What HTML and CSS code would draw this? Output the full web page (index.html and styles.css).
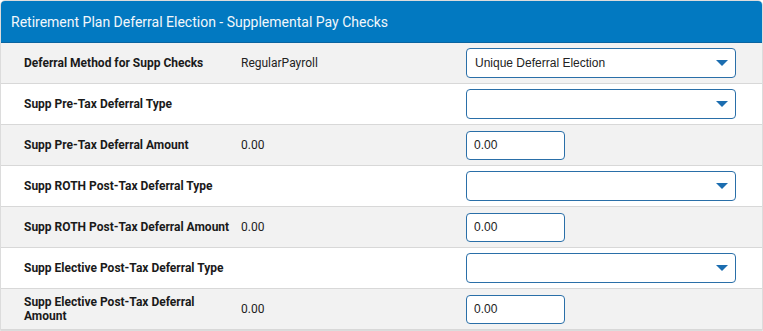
FILE: index.html
```html
<!DOCTYPE html>
<html lang="en">
<head>
    <meta charset="UTF-8">
    <meta name="viewport" content="width=device-width, initial-scale=1.0">
    <title>Supplemental Pay Checks</title>
    <link rel="stylesheet" href="styles.css">
</head>
<body>
    <div class="panel">
        <div class="panel-header">Retirement Plan Deferral Election - Supplemental Pay Checks</div>
        <div class="rows">
            <div class="row">
                <div class="label">Deferral Method for Supp Checks</div>
                <div class="value">RegularPayroll</div>
                <div class="control">
                    <div class="select">
                        <span>Unique Deferral Election</span>
                        <svg class="caret" width="12" height="6" viewBox="0 0 12 6"><path d="M0 0H12L6 6Z"/></svg>
                    </div>
                </div>
            </div>
            <div class="row">
                <div class="label">Supp Pre-Tax Deferral Type</div>
                <div class="value"></div>
                <div class="control">
                    <div class="select">
                        <span></span>
                        <svg class="caret" width="12" height="6" viewBox="0 0 12 6"><path d="M0 0H12L6 6Z"/></svg>
                    </div>
                </div>
            </div>
            <div class="row">
                <div class="label">Supp Pre-Tax Deferral Amount</div>
                <div class="value">0.00</div>
                <div class="control">
                    <input class="amount" type="text" value="0.00">
                </div>
            </div>
            <div class="row">
                <div class="label">Supp ROTH Post-Tax Deferral Type</div>
                <div class="value"></div>
                <div class="control">
                    <div class="select">
                        <span></span>
                        <svg class="caret" width="12" height="6" viewBox="0 0 12 6"><path d="M0 0H12L6 6Z"/></svg>
                    </div>
                </div>
            </div>
            <div class="row">
                <div class="label">Supp ROTH Post-Tax Deferral Amount</div>
                <div class="value">0.00</div>
                <div class="control">
                    <input class="amount" type="text" value="0.00">
                </div>
            </div>
            <div class="row">
                <div class="label">Supp Elective Post-Tax Deferral Type</div>
                <div class="value"></div>
                <div class="control">
                    <div class="select">
                        <span></span>
                        <svg class="caret" width="12" height="6" viewBox="0 0 12 6"><path d="M0 0H12L6 6Z"/></svg>
                    </div>
                </div>
            </div>
            <div class="row">
                <div class="label">Supp Elective Post-Tax Deferral Amount</div>
                <div class="value">0.00</div>
                <div class="control">
                    <input class="amount" type="text" value="0.00">
                </div>
            </div>
        </div>
    </div>
</body>
</html>
```

FILE: styles.css
```css
* {
    margin: 0;
    padding: 0;
    box-sizing: border-box;
}

body {
    font-family: Roboto, 'Liberation Sans', sans-serif;
    background: #ffffff;
    color: #222222;
}

.panel {
    width: 763px;
    border: 1px solid #dcdcdc;
    border-radius: 5px 5px 0 0;
    overflow: hidden;
}

.panel-header {
    height: 42px;
    padding: 0 10px;
    display: flex;
    align-items: center;
    background: #0279c1;
    color: #f2f7fb;
    font-size: 14px;
    border-bottom: 1px solid #0a64a0;
}

.row {
    display: grid;
    grid-template-columns: 217px 225px 270px;
    align-items: center;
    height: 41px;
    padding-left: 23px;
    border-bottom: 1px solid #d8d8d8;
    font-size: 12px;
}

.row:nth-child(odd) {
    background: #f2f2f2;
}

.row:nth-child(even) {
    background: #ffffff;
}

.label {
    font-weight: bold;
    padding-right: 10px;
    line-height: 14px;
    color: #1a1a1a;
}

.value {
    color: #222222;
}

.select {
    height: 30px;
    width: 270px;
    border: 1px solid #2a6fa8;
    border-radius: 4px;
    background: #ffffff;
    display: flex;
    align-items: center;
    justify-content: space-between;
    padding: 0 7px 0 8px;
    font-family: 'Liberation Sans', Arial, sans-serif;
    font-size: 12px;
    color: #222222;
}

.caret {
    fill: #1b6db0;
}

.amount {
    width: 99px;
    height: 29px;
    border: 1px solid #2a6fa8;
    border-radius: 4px;
    padding: 0 7px;
    font-family: 'Liberation Sans', Arial, sans-serif;
    font-size: 12px;
    color: #222222;
    background: #ffffff;
    outline: none;
}
```
